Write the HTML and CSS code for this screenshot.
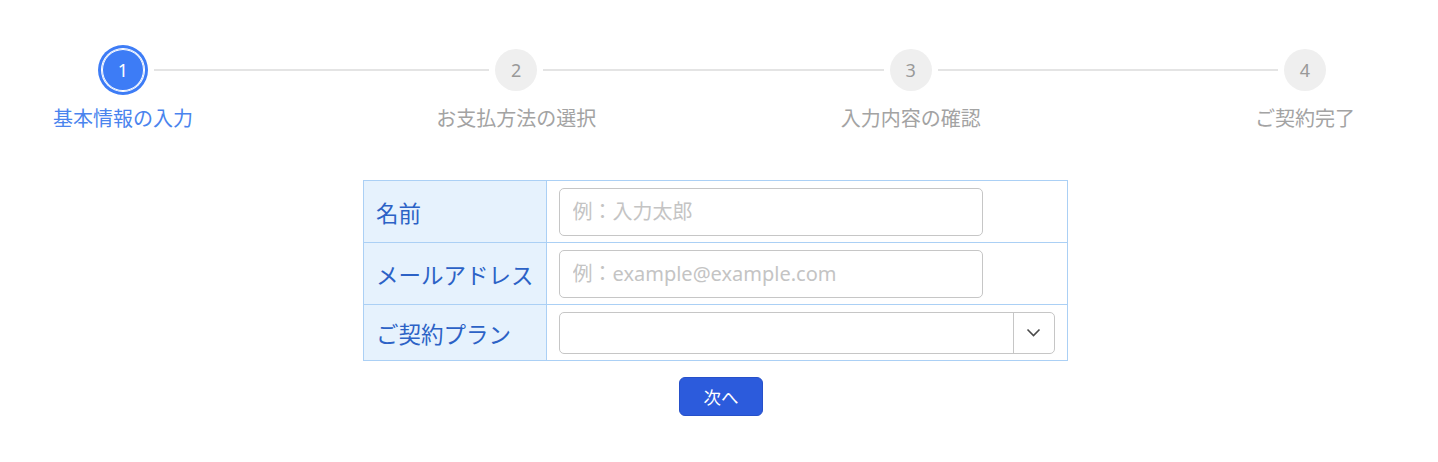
FILE: index.html
```html
<!DOCTYPE html>
<html lang="ja">

<head>
  <meta charset="UTF-8" />
  <meta name="viewport" content="width=device-width, initial-scale=1.0" />
  <title>お申し込み</title>
  <link rel="stylesheet" href="styles.css">
</head>

<body>
  <div class="stepper">
    <div class="step active">
      <span class="dot">1</span>
      <span class="label">基本情報の入力</span>
    </div>
    <div class="bar first"></div>
    <div class="step">
      <span class="dot">2</span>
      <span class="label">お支払方法の選択</span>
    </div>
    <div class="bar"></div>
    <div class="step">
      <span class="dot">3</span>
      <span class="label">入力内容の確認</span>
    </div>
    <div class="bar"></div>
    <div class="step">
      <span class="dot">4</span>
      <span class="label">ご契約完了</span>
    </div>
  </div>

  <form class="form">
    <table class="form-table">
      <tr>
        <th>名前</th>
        <td><input type="text" class="text-input" placeholder="例：入力太郎" /></td>
      </tr>
      <tr>
        <th>メールアドレス</th>
        <td><input type="email" class="text-input" placeholder="例：example@example.com" /></td>
      </tr>
      <tr>
        <th>ご契約プラン</th>
        <td>
          <div class="select">
            <span class="select-value"></span>
            <span class="select-arrow">
              <svg width="15" height="9" viewBox="0 0 15 9">
                <path d="M1.5 1.5l6 6 6-6" fill="none" stroke="#4a4a4a" stroke-width="1.6" />
              </svg>
            </span>
          </div>
        </td>
      </tr>
    </table>

    <div class="actions">
      <button type="button" class="next-btn">次へ</button>
    </div>
  </form>
</body>

</html>
```

FILE: styles.css
```css
:root {
  --active: #3d7cf6;
  --active-text: #4a84ee;
  --muted: #a3a3a3;
  --dot-bg: #efefef;
  --line: #e4e4e4;
  --cell-border: #abd0f5;
  --cell-bg: #e6f2fd;
  --label-text: #2c62c6;
  --input-border: #c6c6c6;
  --btn: #2c5bdc;
}

* {
  box-sizing: border-box;
}

body {
  margin: 0;
  font-family: "Noto Sans", "Noto Sans CJK JP", sans-serif;
  color: #333;
  background: #fff;
}

/* steps */
.stepper {
  display: flex;
  align-items: flex-start;
  padding: 49px 112px 0 102px;
}

.step {
  width: 42px;
  display: flex;
  flex-direction: column;
  align-items: center;
}

.dot {
  width: 42px;
  height: 42px;
  border-radius: 50%;
  background: var(--dot-bg);
  color: #999;
  font-size: 18px;
  display: flex;
  align-items: center;
  justify-content: center;
}

.label {
  margin-top: 13px;
  font-family: "Noto Sans CJK JP", sans-serif;
  font-size: 20px;
  line-height: 28px;
  white-space: nowrap;
  color: var(--muted);
}

.step.active .dot {
  background: var(--active);
  color: #fff;
  box-shadow: inset 0 0 0 1px #fff, 0 0 0 1px #fff, 0 0 0 4px var(--active);
}

.step.active .label {
  color: var(--active-text);
}

.bar {
  flex: 1;
  height: 2px;
  margin: 20px 6px 0;
  background: var(--line);
}

.bar.first {
  flex-grow: 0.985;
  margin-left: 10px;
}

/* form */
.form {
  width: 703px;
  margin: 48px 0 0 363px;
}

.form-table {
  width: 100%;
  border-collapse: collapse;
}

.form-table th,
.form-table td {
  border: 1px solid var(--cell-border);
  padding: 6.5px 12px;
  vertical-align: middle;
}

.form-table th {
  width: 182px;
  background: var(--cell-bg);
  color: var(--label-text);
  font-family: "Noto Sans CJK JP", sans-serif;
  font-size: 22.5px;
  font-weight: 400;
  text-align: left;
  white-space: nowrap;
}

.text-input {
  display: block;
  width: 424px;
  height: 48px;
  padding: 0 13px;
  border: 1px solid var(--input-border);
  border-radius: 5px;
  font-family: inherit;
  font-size: 20px;
  color: #333;
}

.text-input::placeholder {
  color: #c4c4c4;
}

.select {
  display: flex;
  width: 496px;
  height: 42px;
  border: 1px solid var(--input-border);
  border-radius: 5px;
}

.select-value {
  flex: 1;
}

.select-arrow {
  width: 41px;
  border-left: 1px solid var(--input-border);
  display: flex;
  align-items: center;
  justify-content: center;
}

.actions {
  display: flex;
  justify-content: center;
  padding-left: 13px;
  margin-top: 16px;
}

.next-btn {
  width: 84px;
  height: 39px;
  background: var(--btn);
  color: #fff;
  border: 1px solid #2650c9;
  border-radius: 6px;
  font-family: "Noto Sans CJK JP", sans-serif;
  font-size: 17.5px;
  cursor: pointer;
}

.next-btn:hover {
  background: #2249c0;
}
```
